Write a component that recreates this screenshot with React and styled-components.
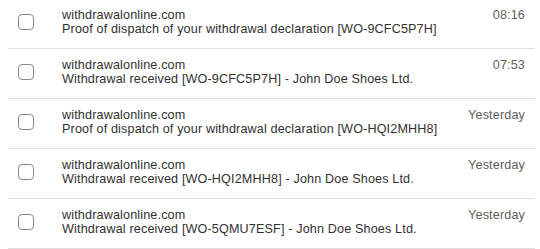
import React from "react";
import styled, { createGlobalStyle } from "styled-components";

const GlobalStyle = createGlobalStyle`
  body {
    margin: 0;
    background: #ffffff;
    font-family: "Liberation Sans", Arial, sans-serif;
  }
`;

const messages = [
  { from: "withdrawalonline.com", subject: "Proof of dispatch of your withdrawal declaration [WO-9CFC5P7H]", time: "08:16" },
  { from: "withdrawalonline.com", subject: "Withdrawal received [WO-9CFC5P7H] - John Doe Shoes Ltd.", time: "07:53" },
  { from: "withdrawalonline.com", subject: "Proof of dispatch of your withdrawal declaration [WO-HQI2MHH8]", time: "Yesterday" },
  { from: "withdrawalonline.com", subject: "Withdrawal received [WO-HQI2MHH8] - John Doe Shoes Ltd.", time: "Yesterday" },
  { from: "withdrawalonline.com", subject: "Withdrawal received [WO-5QMU7ESF] - John Doe Shoes Ltd.", time: "Yesterday" },
];

export default function App() {
  return (
    <>
      <GlobalStyle />
      <List>
        {messages.map((m, i) => (
          <Row key={i}>
            <Check type="checkbox" aria-label="Select message" />
            <Body>
              <Line>{m.from}</Line>
              <Line>{m.subject}</Line>
            </Body>
            <Time>{m.time}</Time>
          </Row>
        ))}
      </List>
    </>
  );
}

const List = styled.div`
  margin: -1px 5px 0 8px;
  display: flex;
  flex-direction: column;
`;

const Row = styled.div`
  display: flex;
  align-items: flex-start;
  height: 49px;
  border-bottom: 1px solid #e1dfdd;
  padding: 0 10px;
`;

const Check = styled.input`
  appearance: none;
  margin: 15px 28px 0 0;
  width: 16px;
  height: 16px;
  border: 1px solid #8a8886;
  border-radius: 4px;
  background: #fff;
  flex: none;
`;

const Body = styled.div`
  flex: 1;
  padding-top: 9px;
  min-width: 0;
`;

const Line = styled.div`
  font-size: 12.6px;
  letter-spacing: 0.15px;
  line-height: 14px;
  height: 14px;
  color: #323130;
  white-space: nowrap;
`;

const Time = styled.div`
  padding-top: 9px;
  font-size: 12.6px;
  letter-spacing: 0.15px;
  line-height: 14px;
  color: #605e5c;
`;
